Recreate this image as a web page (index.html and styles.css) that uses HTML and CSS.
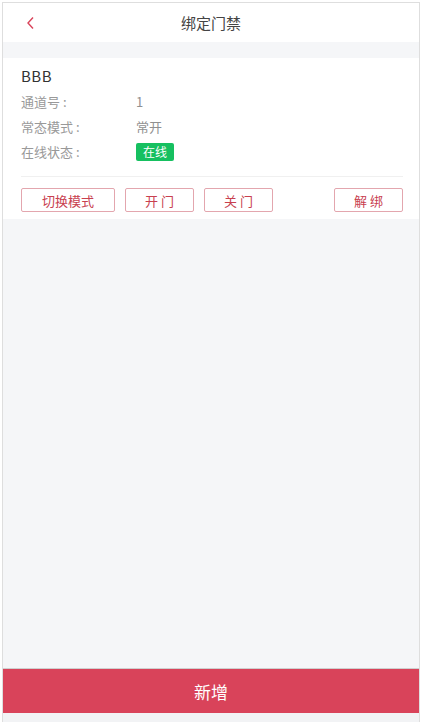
FILE: index.html
```html
<!DOCTYPE html>
<html lang="zh-CN">
<head>
    <meta charset="UTF-8">
    <meta name="viewport" content="width=device-width, initial-scale=1.0">
    <title>绑定门禁</title>
    <link rel="stylesheet" href="styles.css">
</head>
<body>
    <div class="phone">
        <!-- 顶部导航 -->
        <div class="nav-bar">
            <span class="nav-back">
                <svg width="9" height="14" viewBox="0 0 9 14">
                    <path d="M7 1.5 L2 7 L7 12.5" fill="none" stroke="#d9435a" stroke-width="1.4"/>
                </svg>
            </span>
            <span class="nav-title">绑定门禁</span>
        </div>

        <div class="page">
            <!-- 门禁卡片 -->
            <div class="door-card">
                <div class="door-name">BBB</div>
                <div class="info-row"><span class="info-label">通道号 :</span><span class="info-value">1</span></div>
                <div class="info-row"><span class="info-label">常态模式 :</span><span class="info-value">常开</span></div>
                <div class="info-row"><span class="info-label">在线状态 :</span><span class="status-tag">在线</span></div>
                <div class="card-actions">
                    <button class="btn btn-mode">切换模式</button>
                    <button class="btn btn-small">开 门</button>
                    <button class="btn btn-small">关 门</button>
                    <button class="btn btn-small btn-right">解 绑</button>
                </div>
            </div>
        </div>

        <div class="footer">
            <button class="add-btn">新增</button>
        </div>
    </div>
</body>
</html>
```

FILE: styles.css
```css
html, body {
    margin: 0;
    padding: 0;
    background-color: #fff;
}
body {
    font-family: "Noto Sans CJK SC", "Noto Sans", Arial, sans-serif;
    color: #333;
}
.phone {
    box-sizing: border-box;
    width: 418px;
    height: 720px;
    margin: 2px 0 0 2px;
    border: 1px solid #dedede;
    border-bottom: none;
    background-color: #f5f6f8;
    display: flex;
    flex-direction: column;
}
.nav-bar {
    height: 39px;
    background-color: #fff;
    display: flex;
    align-items: center;
    justify-content: center;
    position: relative;
}
.nav-back {
    position: absolute;
    left: 23px;
    top: 13px;
    line-height: 0;
}
.nav-title {
    font-size: 15px;
    color: #444;
}
.page {
    flex: 1;
    padding-top: 16px;
    background-color: #f5f6f8;
}
.door-card {
    background-color: #fff;
    padding: 5px 16px 7px 18px;
}
.door-name {
    font-size: 15px;
    line-height: 26px;
    color: #333;
    letter-spacing: 0.5px;
}
.info-row {
    display: flex;
    align-items: center;
    height: 25px;
    font-size: 13px;
    color: #999;
}
.info-label {
    width: 115px;
}
.info-value {
    color: #909090;
}
.status-tag {
    background-color: #16c060;
    color: #fff;
    font-size: 12px;
    line-height: 18px;
    padding: 0 7px;
    border-radius: 2px;
}
.card-actions {
    margin-top: 12px;
    padding-top: 11px;
    border-top: 1px solid #f0f0f0;
    display: flex;
    gap: 10px;
}
.btn {
    box-sizing: border-box;
    height: 24px;
    background-color: #fff;
    border: 1px solid #e3a6ae;
    border-radius: 2px;
    color: #c8404f;
    font-family: inherit;
    font-size: 13px;
    padding: 0;
    cursor: pointer;
}
.btn-mode {
    width: 94px;
}
.btn-small {
    width: 69px;
}
.btn-right {
    margin-left: auto;
}
.footer {
    padding-bottom: 9px;
    background-color: #f2f3f5;
}
.add-btn {
    display: block;
    width: 100%;
    height: 45px;
    border: none;
    border-top: 1px solid #cfcfcf;
    background-color: #d9435a;
    color: #fff;
    font-family: inherit;
    font-size: 17px;
    cursor: pointer;
}
```
